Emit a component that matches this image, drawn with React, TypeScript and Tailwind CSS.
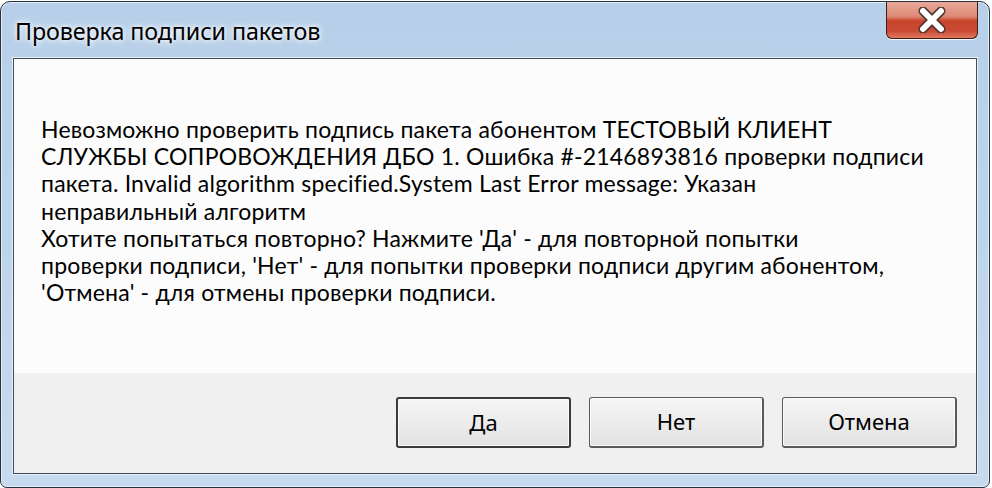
import React from "react";

const lines = [
  "Невозможно проверить подпись пакета абонентом ТЕСТОВЫЙ КЛИЕНТ",
  "СЛУЖБЫ СОПРОВОЖДЕНИЯ ДБО 1. Ошибка #-2146893816 проверки подписи",
  "пакета. Invalid algorithm specified.System Last Error message: Указан",
  "неправильный алгоритм",
  "Хотите попытаться повторно? Нажмите 'Да' - для повторной попытки",
  "проверки подписи, 'Нет' - для попытки проверки подписи другим абонентом,",
  "'Отмена' - для отмены проверки подписи.",
];

function CloseButton() {
  return (
    <div className="absolute right-[11px] top-0 w-[92px] h-[37px] rounded-b-[6px] border border-t-0 border-[#3a1f1a] bg-[linear-gradient(to_bottom,#e9a999_0%,#dd8a77_40%,#c9452c_52%,#c84a32_80%,#e07a5f_100%)] flex items-center justify-center shadow-[0_1px_0_#f4f7fb]">
      <svg width="30" height="26" viewBox="0 0 30 26">
        <path d="M6 4 L24 22 M24 4 L6 22" stroke="#4a3531" strokeWidth="9" strokeLinecap="round" />
        <path d="M6 4 L24 22 M24 4 L6 22" stroke="#ffffff" strokeWidth="6" strokeLinecap="round" />
      </svg>
    </div>
  );
}

function Btn({ label, def }: { label: string; def?: boolean }) {
  return (
    <button
      className={
        "w-[175px] h-[51px] rounded-[3px] flex items-center justify-center text-[22px] text-black bg-[linear-gradient(to_bottom,#f5f5f5_0%,#ececec_50%,#e2e2e2_100%)] " +
        (def
          ? "border-2 border-[#3b3b3b] shadow-[inset_0_0_0_1px_#fafafa]"
          : "border border-[#5a5a5a] border-b-2 border-r-2 shadow-[inset_0_0_0_1px_#fbfbfb]")
      }
      style={{ fontFamily: "'Noto Sans', 'Open Sans', sans-serif" }}
    >
      {label}
    </button>
  );
}

export default function App() {
  return (
    <div
      className="w-[992px] h-[488px] bg-white overflow-hidden"
      style={{ fontFamily: "'Noto Sans', 'Open Sans', sans-serif" }}
    >
      <div className="relative mt-[1px] w-[990px] h-[487px] border border-[#28323e] rounded-t-[10px] rounded-b-[7px] bg-[linear-gradient(to_bottom,#b7cfe8_0%,#bcd3eb_40%,#c8dbee_100%)] shadow-[inset_0_0_0_1px_#e6eef7] flex flex-col px-[12px] pb-[13px]">
        <div className="h-[56px] flex items-center pl-[2px] pt-[2px]">
          <span className="text-[23.3px] text-black tracking-[-0.1px] [text-shadow:0_0_8px_#ffffff,0_0_4px_#ffffff]">
            Проверка подписи пакетов
          </span>
        </div>
        <CloseButton />
        <div className="flex-1 flex flex-col border border-[#3f4b58] shadow-[0_0_0_1px_#e9f0f7]">
          <div
            className="flex-1 bg-[#fcfcfc] pl-[27px] pt-[57px] text-[23px] leading-[27.2px] tracking-[0.2px] text-black"
            style={{ fontFamily: "Lato, 'Noto Sans', sans-serif" }}
          >
            {lines.map((l, i) => (
              <div key={i} className="whitespace-nowrap">
                {l}
              </div>
            ))}
          </div>
          <div className="h-[100px] bg-[#f0f0f0] flex items-center justify-end gap-[18px] pr-[19px] pb-[2px]">
            <Btn label="Да" def />
            <Btn label="Нет" />
            <Btn label="Отмена" />
          </div>
        </div>
      </div>
    </div>
  );
}
